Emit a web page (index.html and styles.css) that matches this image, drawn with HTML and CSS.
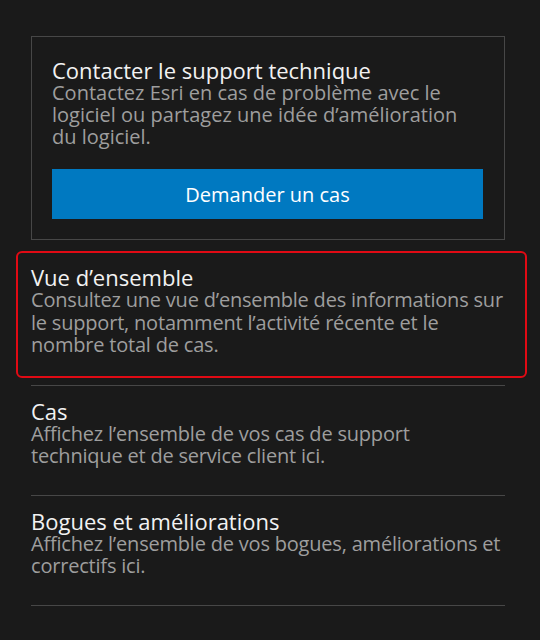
FILE: index.html
```html
<!DOCTYPE html>
<html lang="fr">
<head>
<meta charset="utf-8">
<link rel="stylesheet" href="styles.css">
</head>
<body>
<div class="page">
  <section class="card">
    <h2 class="title">Contacter le support technique</h2>
    <p class="desc">Contactez Esri en cas de problème avec le logiciel ou partagez une idée d’amélioration du logiciel.</p>
    <button class="btn">Demander un cas</button>
  </section>
  <ul class="list">
    <li class="item item-focus">
      <h3 class="title">Vue d’ensemble</h3>
      <p class="desc">Consultez une vue d’ensemble des informations sur le support, notamment l’activité récente et le nombre total de cas.</p>
    </li>
    <li class="item">
      <h3 class="title">Cas</h3>
      <p class="desc">Affichez l’ensemble de vos cas de support technique et de service client ici.</p>
    </li>
    <li class="item">
      <h3 class="title">Bogues et améliorations</h3>
      <p class="desc">Affichez l’ensemble de vos bogues, améliorations et correctifs ici.</p>
    </li>
  </ul>
</div>
</body>
</html>
```
FILE: styles.css
```css
html, body {
  margin: 0;
  padding: 0;
  background: #1a1a1a;
}
body {
  font-family: "Open Sans", "Noto Sans", sans-serif;
  color: #ececec;
}
.page {
  padding: 36px 35px 0 31px;
}
.card {
  border: 1px solid #474747;
  padding: 21px 21px 20px 20px;
}
.title {
  margin: 0;
  font-size: 22px;
  font-weight: 400;
  line-height: 24px;
  color: #f2f2f2;
}
.desc {
  margin: 0;
  font-size: 20px;
  line-height: 22.5px;
  color: #9e9e9e;
}
.card .desc {
  line-height: 22px;
}
.list .desc {
  letter-spacing: -0.2px;
}
.btn {
  display: block;
  width: 100%;
  height: 50px;
  margin-top: 21px;
  border: none;
  background: #0079c1;
  color: #ffffff;
  font-family: inherit;
  font-size: 20px;
  padding: 0;
}
.list {
  list-style: none;
  margin: 12px 0 0;
  padding: 0;
}
.item {
  position: relative;
  padding: 13px 0 27px;
  border-bottom: 1px solid #474747;
}
.item:first-child {
  padding-bottom: 28px;
}
.item-focus::before {
  content: "";
  position: absolute;
  top: -1px;
  left: -15px;
  right: -22px;
  bottom: 7px;
  border: 2px solid #e00a14;
  border-radius: 6px;
  pointer-events: none;
}
```
